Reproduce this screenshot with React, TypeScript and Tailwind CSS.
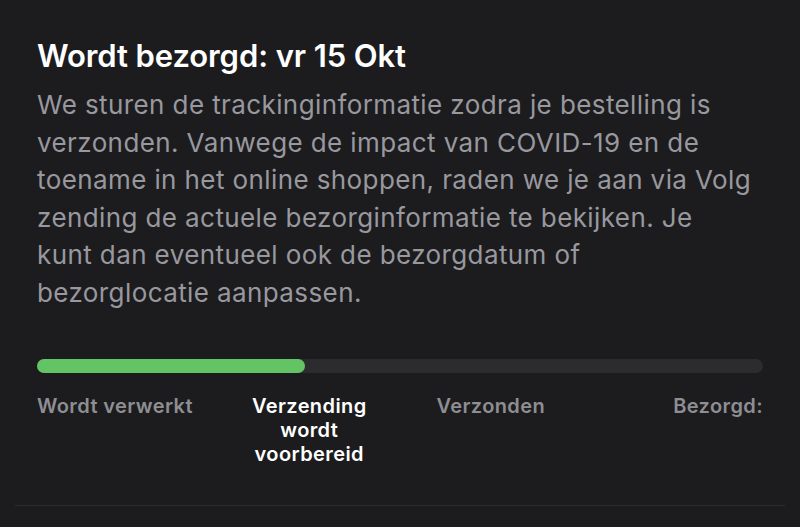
export default function App() {
  const font = { fontFamily: 'Inter, "Noto Sans", sans-serif' };
  return (
    <div className="w-[800px] h-[527px] bg-[#1c1c1e] overflow-hidden" style={font}>
      <div className="px-[37px] pt-[37px]">
        <h1 className="text-[31px] leading-[38px] font-semibold text-white tracking-[-0.1px]">
          Wordt bezorgd: vr 15 Okt
        </h1>
        <p className="mt-[11px] text-[26px] leading-[37.6px] text-[#98989e] w-[740px] tracking-[0.4px] whitespace-nowrap">
          We sturen de trackinginformatie zodra je bestelling is<br />
          verzonden. Vanwege de impact van COVID-19 en de<br />
          toename in het online shoppen, raden we je aan via Volg<br />
          zending de actuele bezorginformatie te bekijken. Je<br />
          kunt dan eventueel ook de bezorgdatum of<br />
          bezorglocatie aanpassen.
        </p>
        <div className="mt-[47px] h-[14px] w-[726px] rounded-full bg-[#2c2c2e]">
          <div className="h-full w-[268px] rounded-full bg-[#63c466]" />
        </div>
        <div className="mt-[21px] grid grid-cols-4 w-[726px] text-[20px] leading-[24px] font-semibold tracking-[0.4px]">
          <div className="text-left text-[#8e8e93]">Wordt verwerkt</div>
          <div className="text-center text-white">Verzending<br />wordt<br />voorbereid</div>
          <div className="text-center text-[#8e8e93]">Verzonden</div>
          <div className="text-right text-[#8e8e93]">Bezorgd:</div>
        </div>
      </div>
      <div className="mx-[15px] mt-[39px] h-px bg-[#2c2c2e]" />
    </div>
  );
}
